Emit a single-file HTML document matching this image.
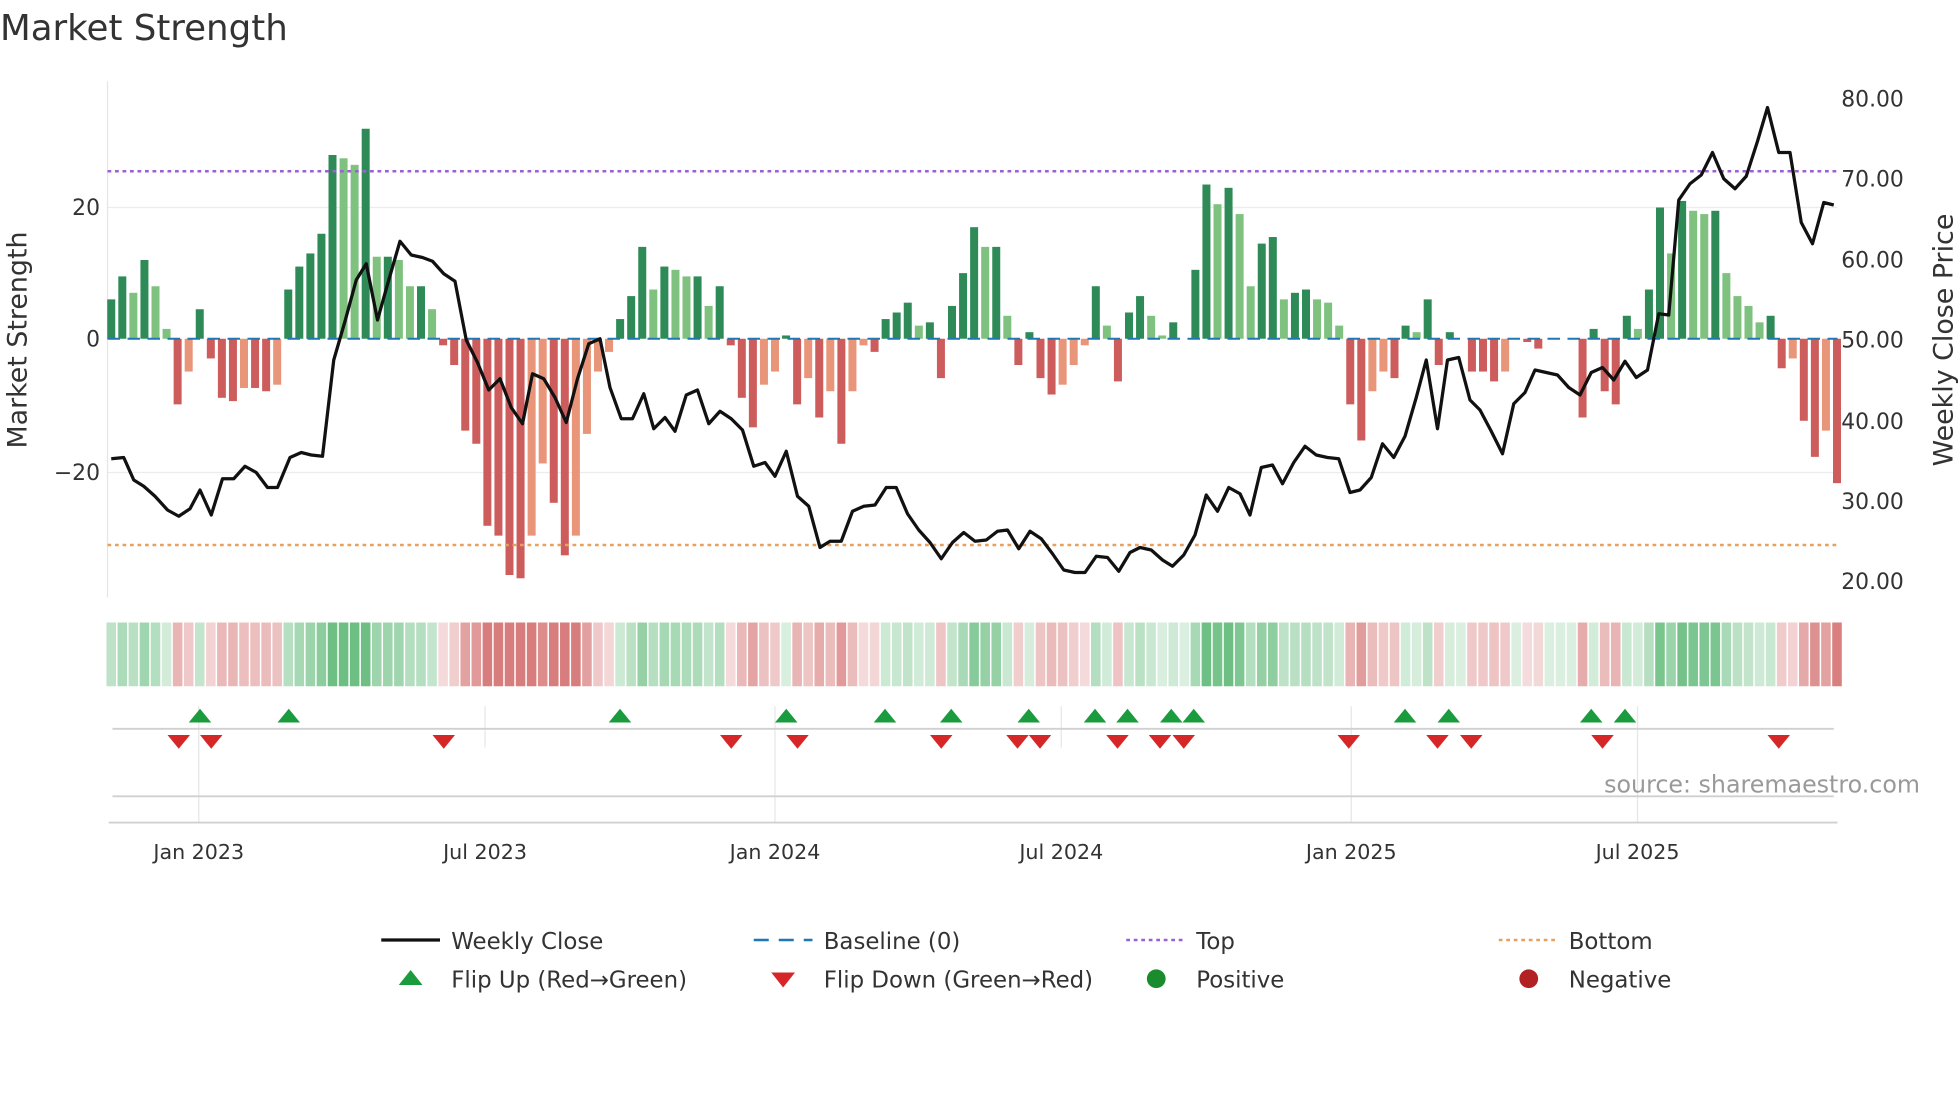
<!DOCTYPE html>
<html><head><meta charset="utf-8">
<style>
html,body{margin:0;padding:0;background:#fff;width:1960px;height:1102px;overflow:hidden}
svg{display:block}
text{font-family:"DejaVu Sans","Liberation Sans",sans-serif;fill:#333}
</style></head>
<body>
<svg id="s" width="1960" height="1102" viewBox="0 0 1568 881.6" xmlns="http://www.w3.org/2000/svg">
<rect width="1568" height="882" fill="#fff"/>
<text x="0" y="32" font-size="28.5" fill="#333">Market Strength</text>
<g stroke="#ececec" stroke-width="1">
<line x1="86" x2="1470" y1="166" y2="166"/>
<line x1="86" x2="1470" y1="378" y2="378"/>
</g>
<line x1="86" x2="86" y1="65" y2="478" stroke="#e6e6e6"/>
<g id="bars"></g>
<line x1="86" x2="1470" y1="271" y2="271" stroke="#1f77b4" stroke-width="1.6" stroke-dasharray="10,6"/>
<line x1="86" x2="1470" y1="137" y2="137" stroke="#9b5fd6" stroke-width="2" stroke-dasharray="3,3"/>
<line x1="86" x2="1470" y1="436" y2="436" stroke="#e8a060" stroke-width="2" stroke-dasharray="3,3"/>
<polyline id="price" fill="none" stroke="#111" stroke-width="2.6" stroke-linejoin="round"/>
<g font-size="17.5" text-anchor="end">
<text x="80" y="172">20</text><text x="80" y="277">0</text><text x="80" y="384">−20</text>
</g>
<g font-size="17.5">
<text x="1473" y="85">80.00</text><text x="1473" y="149">70.00</text><text x="1473" y="214">60.00</text>
<text x="1473" y="278">50.00</text><text x="1473" y="343">40.00</text><text x="1473" y="407">30.00</text>
<text x="1473" y="471">20.00</text>
</g>
<text transform="translate(21,272) rotate(-90)" font-size="21.5" text-anchor="middle">Market Strength</text>
<text transform="translate(1562,272) rotate(-90)" font-size="21.5" text-anchor="middle">Weekly Close Price</text>
<g id="strip"></g>
<g stroke="#e6e6e6" stroke-width="1">
<line x1="159" x2="159" y1="565" y2="658"/><line x1="388" x2="388" y1="565" y2="598"/>
<line x1="620" x2="620" y1="565" y2="658"/><line x1="849" x2="849" y1="565" y2="598"/>
<line x1="1081" x2="1081" y1="565" y2="658"/><line x1="1310" x2="1310" y1="565" y2="658"/>
</g>
<line x1="90" x2="1467" y1="583" y2="583" stroke="#d0d0d0" stroke-width="1.5"/>
<line x1="90" x2="1467" y1="637" y2="637" stroke="#d0d0d0" stroke-width="1.5"/>
<line x1="87" x2="1470" y1="658" y2="658" stroke="#d0d0d0" stroke-width="1.5"/>
<g id="marks"></g>
<text x="1536" y="634" font-size="19" text-anchor="end" style="fill:#999">source: sharemaestro.com</text>
<g font-size="16.5" text-anchor="middle">
<text x="159" y="687">Jan 2023</text><text x="388" y="687">Jul 2023</text><text x="620" y="687">Jan 2024</text>
<text x="849" y="687">Jul 2024</text><text x="1081" y="687">Jan 2025</text><text x="1310" y="687">Jul 2025</text>
</g>
<g font-size="18.3">
<line x1="305" x2="352" y1="752" y2="752" stroke="#111" stroke-width="2.6"/>
<text x="361" y="759">Weekly Close</text>
<line x1="603" x2="650" y1="752" y2="752" stroke="#1f77b4" stroke-width="2" stroke-dasharray="12,8"/>
<text x="659" y="759">Baseline (0)</text>
<line x1="901" x2="948" y1="752" y2="752" stroke="#9b5fd6" stroke-width="2" stroke-dasharray="3,3"/>
<text x="957" y="759">Top</text>
<line x1="1199" x2="1246" y1="752" y2="752" stroke="#e8a060" stroke-width="2" stroke-dasharray="3,3"/>
<text x="1255" y="759">Bottom</text>
<polygon points="319,788 338,788 328.5,776" fill="#1a9b3e"/>
<text x="361" y="790">Flip Up (Red→Green)</text>
<polygon points="617,778 636,778 626.5,790" fill="#d62728"/>
<text x="659" y="790">Flip Down (Green→Red)</text>
<circle cx="925" cy="783" r="7.5" fill="#1a8c2e"/>
<text x="957" y="790">Positive</text>
<circle cx="1223" cy="783" r="7.5" fill="#b22222"/>
<text x="1255" y="790">Negative</text>
</g>
</svg>
<script>
var pts=[[89,6],[98,9.5],[107,7],[116,12],[125,8],[134,1.5],[143,-10],[151,-5],[160,4.5],[169,-3],[178,-9],[187,-9.5],[196,-7.5],[205,-7.5],[213,-8],[222,-7],[231,7.5],[240,11],[249,13],[258,16],[266,28],[275,27.5],[284,26.5],[293,32],[302,12.5],[311,12.5],[320,12],[328,8],[337,8],[346,4.5],[355,-1],[364,-4],[373,-14],[381,-16],[390,-28.5],[399,-30],[408,-36],[417,-36.5],[425,-30],[434,-19],[443,-25],[452,-33],[461,-30],[469,-14.5],[478,-5],[487,-2],[496,3],[505,6.5],[514,14],[523,7.5],[531,11],[540,10.5],[549,9.5],[558,9.5],[567,5],[576,8],[585,-1],[593,-9],[602,-13.5],[611,-7],[620,-5],[629,0.5],[638,-10],[647,-6],[655,-12],[664,-8],[673,-16],[682,-8],[691,-1],[699,-2],[708,3],[717,4],[726,5.5],[735,2],[744,2.5],[752,-6],[761,5],[770,10],[779,17],[788,14],[797,14],[805,3.5],[814,-4],[823,1],[832,-6],[841,-8.5],[850,-7],[858,-4],[867,-1],[876,8],[885,2],[894,-6.5],[903,4],[911,6.5],[920,3.5],[929,0.5],[938,2.5],[955,10.5],[964,23.5],[973,20.5],[982,23],[991,19],[999,8],[1008,14.5],[1017,15.5],[1026,6],[1035,7],[1044,7.5],[1052,6],[1061,5.5],[1070,2],[1079,-10],[1088,-15.5],[1097,-8],[1105,-5],[1114,-6],[1123,2],[1132,1],[1141,6],[1150,-4],[1158,1],[1176,-5],[1185,-5],[1194,-6.5],[1202,-5],[1220,-0.5],[1229,-1.5],[1264,-12],[1273,1.5],[1282,-8],[1291,-10],[1300,3.5],[1309,1.5],[1317,7.5],[1326,20],[1335,13],[1343,21],[1352,19.5],[1361,19],[1370,19.5],[1379,10],[1388,6.5],[1397,5],[1405,2.5],[1414,3.5],[1423,-4.5],[1432,-3],[1441,-12.5],[1450,-18],[1458,-14],[1467,-22]];
var sp=8.85,x0=89,N=Math.round((1467-x0)/sp)+1,v=[];for(var i=0;i<N;i++)v.push(0);
pts.forEach(function(p){v[Math.max(0,Math.min(N-1,Math.round((p[0]-x0)/sp)))]=p[1];});
var ns="http://www.w3.org/2000/svg";
function el(t,a,p){var e=document.createElementNS(ns,t);for(var k in a)e.setAttribute(k,a[k]);document.getElementById(p).appendChild(e);}
for(var i=0;i<N;i++){var x=x0+i*sp,val=v[i],pr=i?v[i-1]:0,c;
 if(val>0)c=(val>=pr)?"#2e8b57":"#7fc27f";else c=(val<=pr)?"#cd5c5c":"#e8957a";
 if(Math.abs(val)>0.3){var h=Math.abs(val)*5.25;el("rect",{x:x-3.2,y:val>0?271-h:271,width:6.4,height:h,fill:c},"bars");}
 var a=Math.min(1,0.25+Math.abs(val)/30),col=val>=0?"rgba(60,170,90,"+(a*0.75)+")":"rgba(200,70,70,"+(a*0.7)+")";
 el("rect",{x:x-sp/2+0.6,y:498,width:sp-1.2,height:51,fill:col},"strip");}
var up=[160,231,496,629,708,761,823,876,902,937,955,1124,1159,1273,1300],dn=[143,169,355,585,638,753,814,832,894,928,947,1079,1150,1177,1282,1423];
up.forEach(function(x){el("polygon",{points:(x-9)+",578 "+(x+9)+",578 "+x+",567",fill:"#1a9b3e"},"marks");});
dn.forEach(function(x){el("polygon",{points:(x-9)+",588 "+(x+9)+",588 "+x+",599",fill:"#d62728"},"marks");});
var p="89,367 99,366 107,384 115,389 124,397 134,408 143,413 152,407 160,392 169,412 178,383 187,383 196,373 205,378 214,390 222,390 232,366 241,362 249,364 258,365 267,288 276,257 285,224 293,211 302,256 311,224 320,193 329,204 338,206 346,209 355,219 364,225 373,272 382,290 391,312 400,303 409,326 418,339 426,299 435,303 444,318 453,338 462,303 471,275 480,271 488,310 497,335 506,335 515,315 523,343 532,334 540,345 549,316 558,312 567,339 576,329 585,335 594,344 603,373 612,370 620,381 629,361 638,397 647,405 656,438 664,433 673,433 682,409 691,405 700,404 709,390 717,390 726,411 735,424 744,434 753,447 762,434 771,426 780,433 789,432 798,425 806,424 815,439 824,425 833,431 842,443 851,456 860,458 868,458 877,445 886,446 895,457 904,442 912,438 921,440 930,448 938,453 947,444 956,428 965,396 974,409 983,390 992,395 1000,412 1009,374 1018,372 1026,387 1035,370 1044,357 1053,364 1062,366 1071,367 1080,394 1088,392 1097,382 1106,355 1115,366 1124,349 1133,318 1141,288 1150,343 1158,288 1167,286 1176,320 1184,328 1193,345 1202,363 1211,323 1220,314 1228,296 1237,298 1246,300 1255,310 1264,316 1273,298 1282,294 1291,304 1300,289 1309,302 1318,296 1327,251 1335,252 1343,160 1352,147 1361,140 1370,122 1379,143 1388,151 1397,141 1406,113 1414,86 1423,122 1432,122 1441,178 1450,195 1459,162 1467,164";
document.getElementById("price").setAttribute("points",p);
</script>
</body></html>
